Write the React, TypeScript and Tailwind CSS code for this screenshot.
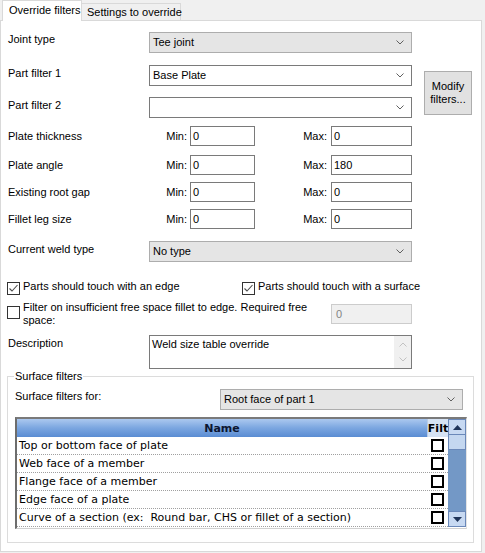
import React from "react";

const uiFont = "font-['Liberation_Sans',Arial,sans-serif] text-[11px] leading-[13px] text-black";
const gridFont = "font-['DejaVu_Sans',Verdana,sans-serif] text-[11px]";

function Chevron({ up = false, color = "#606060" }: { up?: boolean; color?: string }) {
  return (
    <svg width="8" height="5" viewBox="0 0 8 5" className="block">
      <polyline
        points={up ? "0.5,4.5 4,1 7.5,4.5" : "0.5,0.5 4,4 7.5,0.5"}
        fill="none"
        stroke={color}
        strokeWidth="1"
      />
    </svg>
  );
}

function ComboBox({ value = "", gray = false, width }: { value?: string; gray?: boolean; width: string }) {
  return (
    <div
      className={`${width} h-[21px] flex items-center justify-between pl-[3px] pr-[7px] border ${
        gray ? "bg-[#e5e5e5] border-[#adadad]" : "bg-white border-[#7a7a7a]"
      }`}
    >
      <span>{value}</span>
      <Chevron />
    </div>
  );
}

function TextBox({ value, width, disabled = false }: { value: string; width: string; disabled?: boolean }) {
  return (
    <div
      className={`${width} h-[20px] flex items-center border ${
        disabled ? "bg-[#f0f0f0] border-[#cccccc] text-[#838383] pl-[4px]" : "bg-white border-[#7a7a7a] pl-[2px]"
      }`}
    >
      {value}
    </div>
  );
}

function CheckBox({ checked = false }: { checked?: boolean }) {
  return (
    <div className="w-[13px] h-[13px] shrink-0 border border-[#333333] bg-white">
      {checked && (
        <svg width="11" height="11" viewBox="0 0 11 11" className="block">
          <polyline points="1.5,5.5 4,8 9.5,2" fill="none" stroke="#4d4d4d" strokeWidth="1.1" />
        </svg>
      )}
    </div>
  );
}

function RangeRow({ label, min, max, mt }: { label: string; min: string; max: string; mt: string }) {
  return (
    <div className={`${mt} flex items-center h-[20px] pl-[7px]`}>
      <div className="w-[141px]">{label}</div>
      <div className="w-[41px] text-right pr-[3px]">Min:</div>
      <TextBox value={min} width="w-[65px]" />
      <div className="w-[76px] text-right pr-[4px]">Max:</div>
      <TextBox value={max} width="w-[81px]" />
    </div>
  );
}

function ScrollArrow({ down = false }: { down?: boolean }) {
  return (
    <div className="h-[16px] shrink-0 bg-[#c7d9f2] border border-[#6a88b9] flex items-center justify-center">
      <svg width="9" height="5" viewBox="0 0 9 5" className="block">
        <polygon points={down ? "0,0 9,0 4.5,5" : "0,5 9,5 4.5,0"} fill="#1f3459" />
      </svg>
    </div>
  );
}

const surfaces = [
  "Top or bottom face of plate",
  "Web face of a member",
  "Flange face of a member",
  "Edge face of a plate",
  "Curve of a section (ex:  Round bar, CHS or fillet of a section)",
];

export default function App() {
  return (
    <div className={`w-[485px] h-[553px] overflow-hidden bg-[#f0f0f0] ${uiFont}`}>
      {/* tab strip */}
      <div className="flex items-start h-[21px] pl-[2px]">
        <div className="relative z-10 w-[80px] h-[21px] bg-white border border-b-0 border-[#d9d9d9] pl-[6px] pt-[3px] whitespace-nowrap">
          Override filters
        </div>
        <div className="mt-[3px] w-[99px] h-[18px] border border-l-0 border-b-0 border-[#d9d9d9] pl-[5px] pt-[2px] whitespace-nowrap">
          Settings to override
        </div>
      </div>

      <div className="-mt-px w-[482px] h-[532px] border border-[#d9d9d9] bg-white flex flex-col">
        <div className="mt-[11px] flex items-start pl-[7px]">
          <div className="w-[141px] pt-[1px]">Joint type</div>
          <ComboBox value="Tee joint" gray width="w-[263px]" />
        </div>

        <div className="mt-[12px] flex items-start pl-[7px]">
          <div className="flex flex-col">
            <div className="flex items-start">
              <div className="w-[141px] pt-[2px]">Part filter 1</div>
              <ComboBox value="Base Plate" width="w-[263px]" />
            </div>
            <div className="mt-[11px] flex items-start">
              <div className="w-[141px] pt-[2px]">Part filter 2</div>
              <ComboBox width="w-[263px]" />
            </div>
          </div>
          <div className="ml-[12px] mt-[6px] w-[48px] h-[44px] bg-[#e1e1e1] border border-[#adadad] flex flex-col items-center justify-center">
            <span>Modify</span>
            <span>filters...</span>
          </div>
        </div>

        <RangeRow label="Plate thickness" min="0" max="0" mt="mt-[8px]" />
        <RangeRow label="Plate angle" min="0" max="180" mt="mt-[9px]" />
        <RangeRow label="Existing root gap" min="0" max="0" mt="mt-[7px]" />
        <RangeRow label="Fillet leg size" min="0" max="0" mt="mt-[7px]" />

        <div className="mt-[12px] flex items-start pl-[7px]">
          <div className="w-[141px] pt-[2px]">Current weld type</div>
          <ComboBox value="No type" gray width="w-[263px]" />
        </div>

        <div className="mt-[18px] flex items-start h-[15px] pl-[6px]">
          <div className="w-[235px] flex items-start">
            <div className="mt-[2px]">
              <CheckBox checked />
            </div>
            <span className="ml-[3px] whitespace-nowrap">Parts should touch with an edge</span>
          </div>
          <div className="flex items-start">
            <div className="mt-[2px]">
              <CheckBox checked />
            </div>
            <span className="ml-[3px] whitespace-nowrap">Parts should touch with a surface</span>
          </div>
        </div>

        <div className="mt-[6px] flex items-start pl-[6px]">
          <div className="mt-[5px]">
            <CheckBox />
          </div>
          <div className="ml-[3px] w-[308px] whitespace-nowrap">
            Filter on insufficient free space fillet to edge. Required free
            <br />
            space:
          </div>
          <div className="mt-[3px]">
            <TextBox value="0" width="w-[81px]" disabled />
          </div>
        </div>

        <div className="mt-[8px] flex items-start pl-[7px]">
          <div className="w-[141px] pt-[2px]">Description</div>
          <div className="w-[263px] h-[34px] border border-[#7a7a7a] bg-white flex">
            <div className="flex-1 pl-[2px] pt-[2px]">Weld size table override</div>
            <div className="w-[17px] bg-[#f0f0f0] flex flex-col items-center justify-between py-[6px]">
              <Chevron up color="#c2c2c2" />
              <Chevron color="#c2c2c2" />
            </div>
          </div>
        </div>

        {/* surface filters group */}
        <div className="relative mt-[7px] ml-[6px] w-[467px] h-[167px] border border-[#dcdcdc]">
          <div className="absolute top-[-7px] left-[6px] px-[1px] bg-white">Surface filters</div>

          <div className="mt-[12px] flex items-start pl-[7px]">
            <div className="w-[205px] pt-[1px]">Surface filters for:</div>
            <ComboBox value="Root face of part 1" gray width="w-[243px]" />
          </div>

          <div className="mt-[7px] ml-[7px] w-[452px] h-[112px] border-t-2 border-l-2 border-r border-b border-t-[#7a7a7a] border-l-[#6d6d6d] border-r-[#e3e3e3] border-b-[#d0d0d0] flex">
            <div className={`flex flex-col ${gridFont}`}>
              <div className="flex h-[18px]">
                <div className="w-[410px] bg-linear-to-b from-[#abc8ef] via-[#7ba6e0] to-[#5a8cd3] flex items-center justify-center font-bold text-[#0c1630]">
                  Name
                </div>
                <div className="w-[21px] bg-[#d6e3f4] border-l border-[#b9cce6] flex items-center justify-center font-bold overflow-hidden">
                  Filt
                </div>
              </div>
              {surfaces.map((name) => (
                <div key={name} className="flex h-[18px] border-b border-dotted border-[#a0a0a0]">
                  <div className="w-[410px] pl-[2px] flex items-center whitespace-pre overflow-hidden">{name}</div>
                  <div className="w-[21px] pl-[4px] flex items-center">
                    <div className="w-[13px] h-[13px] border-2 border-black bg-white" />
                  </div>
                </div>
              ))}
            </div>
            <div className="w-[18px] h-[108px] bg-[#7398c6] flex flex-col">
              <ScrollArrow />
              <div className="h-[15px] bg-[#c4d7f0] border border-t-0 border-[#6a88b9]" />
              <div className="flex-1" />
              <ScrollArrow down />
            </div>
          </div>
        </div>
      </div>
    </div>
  );
}
